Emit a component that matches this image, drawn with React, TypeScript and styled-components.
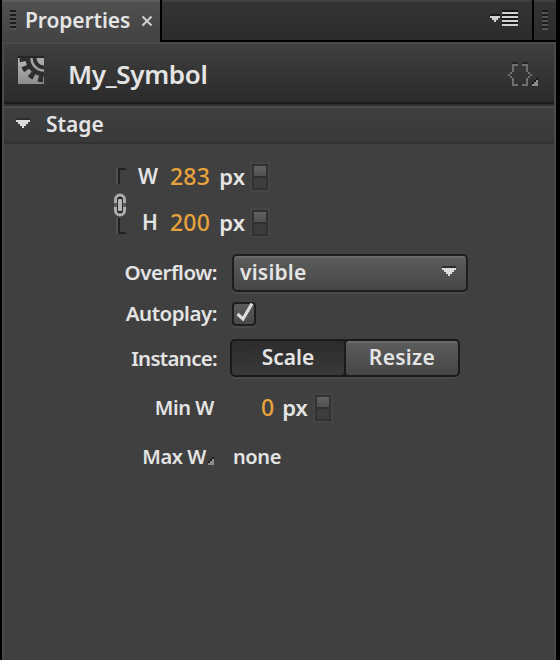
import React from "react";
import styled, { createGlobalStyle } from "styled-components";

const GlobalStyle = createGlobalStyle`
  * { box-sizing: border-box; }
  body { margin: 0; background: #000; font-family: "Noto Sans", "Open Sans", sans-serif; color: #e4e4e4; overflow: hidden; }
  svg { display: block; flex: none; }
`;

const Window = styled.div`
  width: 560px;
  height: 660px;
  display: flex;
  flex-direction: column;
  padding: 0 4px 0 2px;
  background: #000;
`;

const TabBar = styled.div`
  height: 42px;
  flex: none;
  display: flex;
`;

const Tab = styled.div`
  width: 158px;
  height: 42px;
  display: flex;
  align-items: flex-start;
  padding: 8px 0 0 8px;
  border-top: 2px solid #5c5c5c;
  background: linear-gradient(#505050, #424242);
`;

const TabStrip = styled.div<{ $width?: number }>`
  ${(p) => (p.$width ? `width: ${p.$width}px;` : "flex: 1;")}
  height: 40px;
  margin-left: 2px;
  display: flex;
  justify-content: flex-end;
  padding: 8px ${(p) => (p.$width ? 8 : 12)}px 0 0;
  border-top: 2px solid #404040;
  background: linear-gradient(#343434, #2c2c2c);
`;

const Grip = styled.div`
  width: 6px;
  height: 20px;
  flex: none;
  background: repeating-linear-gradient(#1c1c1c 0 2px, #555 2px 4px);
`;

const Text = styled.span<{ $size?: number; $track?: number; $weight?: number }>`
  font-size: ${(p) => p.$size ?? 21}px;
  line-height: 30px;
  height: 30px;
  letter-spacing: ${(p) => p.$track ?? 0}px;
  font-weight: ${(p) => p.$weight ?? 600};
  white-space: nowrap;
`;

const TabTitle = styled(Text)`
  margin: -5px 9px 0 9px;
  width: 107px;
`;

const CloseIcon = styled.svg`
  margin-top: 5px;
`;

const Panel = styled.div`
  flex: 1;
  display: flex;
  flex-direction: column;
  border: solid #4a4a4a;
  border-width: 0 2px;
  background: #404040;
`;

const SymbolHeader = styled.div`
  height: 64px;
  flex: none;
  display: flex;
  align-items: flex-start;
  padding: 12px 16px 0 14px;
  border-top: 2px solid #494949;
  border-bottom: 2px solid #303030;
  background: linear-gradient(#404040, #2a2a2a 58px, #1b1b1b 58px);
`;

const SymbolName = styled(Text)`
  flex: 1;
  margin: 3px 0 0 24px;
`;

const CodeIcon = styled.svg`
  margin-top: 6px;
`;

const SectionHeader = styled.div`
  height: 38px;
  flex: none;
  display: flex;
  align-items: flex-start;
  padding: 1px 0 0 12px;
  gap: 16px;
  border-top: 2px solid #4a4a4a;
  border-bottom: 2px solid #323232;
  background: linear-gradient(#404040, #383838);

  svg { margin-top: 9px; }
`;

const Form = styled.div`
  display: flex;
  flex-direction: column;
  padding-top: 17px;
`;

const SizeGroup = styled.div`
  display: flex;
  height: 93px;
  padding-left: 110px;
  gap: 8px;

  > svg { margin-top: 7px; }
`;

const SizeFields = styled.div`
  display: flex;
  flex-direction: column;
  gap: 16px;
`;

const SizeRow = styled.div`
  height: 30px;
  display: grid;
  grid-template-columns: 22px 52px 35px 24px;
  align-items: center;
  text-align: right;
`;

const Value = styled(Text)`
  color: #e8a33d;
`;

const Stepper = styled.div`
  width: 16px;
  height: 26px;
  margin: 2px 0 0 7px;
  border: 2px solid #323232;
  box-shadow: 0 0 0 2px #454545;
  background: linear-gradient(#626262, #505050 10px, #303030 10px 12px, #3d3d3d 12px);
`;

const Row = styled.div<{ $height: number }>`
  height: ${(p) => p.$height}px;
  display: grid;
  grid-template-columns: 213px 1fr;
  align-items: center;
`;

const RowLabel = styled(Text)<{ $inset?: number; $lift?: number }>`
  text-align: right;
  margin-bottom: ${(p) => p.$lift ?? 0}px;
  padding-right: ${(p) => p.$inset ?? 0}px;
`;

const MenuLabel = styled.div`
  display: flex;
  justify-content: flex-end;
  align-items: center;
  padding-right: 3px;
  gap: 2px;

  svg { margin-top: 8px; }
`;

const Control = styled.div<{ $left: number; $lift?: number }>`
  display: flex;
  align-items: center;
  margin-left: ${(p) => p.$left}px;
  margin-bottom: ${(p) => p.$lift ?? 0}px;
`;

const Select = styled.div`
  width: 236px;
  height: 38px;
  display: flex;
  align-items: center;
  justify-content: space-between;
  padding: 0 10px 2px 6px;
  border: 2px solid #1d1d1d;
  border-radius: 5px;
  box-shadow: 0 2px 0 #4a4a4a;
  background: linear-gradient(#6a6a6a 2px, #5b5b5b 2px, #464646);

  svg { margin-bottom: 2px; }
`;

const CheckBox = styled.div`
  width: 24px;
  height: 24px;
  border: 2px solid #1d1d1d;
  border-radius: 4px;
  box-shadow: 0 2px 0 #4a4a4a;
  background: linear-gradient(#5b5b5b, #484848);

  svg { margin: -2px 0 0 2px; }
`;

const Segments = styled.div`
  width: 230px;
  height: 38px;
  display: flex;
  border: 2px solid #1a1a1a;
  border-radius: 5px;
  box-shadow: 0 2px 0 #4a4a4a;
  background: #1a1a1a;
  gap: 2px;
`;

const Segment = styled.div<{ $active?: boolean }>`
  flex: none;
  width: 112px;
  display: flex;
  align-items: center;
  justify-content: center;
  padding-bottom: 2px;
  border-radius: 3px;
  background: ${(p) => (p.$active ? "linear-gradient(#2c2c2c, #393939)" : "linear-gradient(#6a6a6a 2px, #5b5b5b 2px, #464646)")};
`;

const Triangle = () => (
  <svg width="14" height="10" viewBox="0 0 7 5" shapeRendering="crispEdges">
    <path d="M0 0h7v1H0z" fill="#2c2c2c" />
    <path d="M0 1h7v1H6v1H5v1H4v1H3V4H2V3H1V2H0z" fill="#dcdcdc" />
  </svg>
);

const Corner = () => (
  <svg width="6" height="8" viewBox="0 0 3 4" shapeRendering="crispEdges">
    <path d="M2 0h1v1H2v1H1v1H0V2h1V1h1z" fill="#1e1e1e" />
    <path d="M2 1h1v3H0V3h1V2h1z" fill="#8c8c8c" />
  </svg>
);

const SymbolIcon = () => (
  <svg width="26" height="28" viewBox="0 -2 26 28">
    <defs>
      <linearGradient id="plate" x1="0" y1="0" x2="0" y2="1">
        <stop offset="0" stopColor="#b8b8b8" />
        <stop offset="1" stopColor="#8c8c8c" />
      </linearGradient>
    </defs>
    <path d="M0-2h26v2H0z" fill="#262626" />
    <path d="M0 0h26v26H0z" fill="url(#plate)" />
    <svg x="0" y="0" width="26" height="26" viewBox="0 0 26 26">
      <circle cx="26" cy="0" r="18.5" fill="#2e2e2e" />
      <circle cx="26" cy="0" r="21" fill="none" stroke="#2e2e2e" strokeWidth="7" strokeDasharray="4.9 4.525" strokeDashoffset="-5.35" />
      <circle cx="26" cy="0" r="12.5" fill="none" stroke="#a0a0a0" strokeWidth="2.6" />
      <circle cx="26" cy="0" r="7.5" fill="#a8a8a8" />
    </svg>
  </svg>
);

const LinkIcon = () => (
  <svg width="14" height="66" viewBox="0 0 14 66">
    <path d="M2 0h2v16H2zM2 50h2v16H2z" fill="#525252" />
    <path d="M4 0h8v2H6v14H4zM4 50h2v14h6v2H4z" fill="#242020" />
    <rect x="1.5" y="27" width="9" height="20" rx="4.5" fill="#2a2a2a" stroke="#adadad" strokeWidth="3" />
    <path d="M0 35h3v4H0zM9 35h3v4H9z" fill="#5c5c5c" />
    <rect x="4" y="31" width="4" height="12" rx="1" fill="#b4b4b4" />
  </svg>
);

const fields = [
  { name: "W", value: "283" },
  { name: "H", value: "200" },
];

const App = () => (
  <>
    <GlobalStyle />
    <Window>
      <TabBar>
        <Tab>
          <Grip />
          <TabTitle $track={-0.1}>Properties</TabTitle>
          <CloseIcon width="12" height="12" viewBox="0 0 12 12">
            <path d="M1.5 1.5l9 9M10.5 1.5l-9 9" stroke="#d0d0d0" strokeWidth="2" />
          </CloseIcon>
        </Tab>
        <TabStrip>
          <svg width="30" height="18" viewBox="0 0 15 9" shapeRendering="crispEdges">
            <path d="M0 2h5v1H0zM6 0h8v1H6zM6 2h8v1H6zM6 4h8v1H6zM6 6h8v1H6z" fill="#181818" />
            <path d="M0 3h5v1H4v1H3v1H2V5H1V4H0zM6 1h8v1H6zM6 3h8v1H6zM6 5h8v1H6zM6 7h8v1H6z" fill="#d0d0d0" />
          </svg>
        </TabStrip>
        <TabStrip $width={22}><Grip /></TabStrip>
      </TabBar>
      <Panel>
        <SymbolHeader>
          <SymbolIcon />
          <SymbolName $size={26} $track={-0.35}>My_Symbol</SymbolName>
          <CodeIcon width="30" height="24" viewBox="0 0 15 12" shapeRendering="crispEdges">
            <path d="M2 0h3v1H2zM7 0h3v1H7z" fill="#222" />
            <path d="M2 1h3v1H3v3H2v1H1v1h1v1h1v3h2v1H2V8H1V7H0V6h1V5h1zM7 1h3v4h1v1h1v1h-1v1h-1v4H7v-1h2V8h1V7h1V6h-1V5H9V2H7z" fill="#707070" />
            <path d="M14 8h1v1h-1v1h-1v1h-1v-1h1V9h1z" fill="#181818" />
            <path d="M14 9h1v3h-3v-1h1v-1h1z" fill="#8c8c8c" />
          </CodeIcon>
        </SymbolHeader>
        <SectionHeader>
          <Triangle />
          <Text>Stage</Text>
        </SectionHeader>
        <Form>
          <SizeGroup>
            <LinkIcon />
            <SizeFields>
              {fields.map((f) => (
                <SizeRow key={f.name}>
                  <Text>{f.name}</Text>
                  <Value $size={23} $weight={500} $track={0.2}>{f.value}</Value>
                  <Text $size={22}>px</Text>
                  <Stepper />
                </SizeRow>
              ))}
            </SizeFields>
          </SizeGroup>
          <Row $height={38}>
            <RowLabel $size={20.5} $track={-0.45} $lift={2}>Overflow:</RowLabel>
            <Control $left={15}><Select><Text $track={0.2}>visible</Text><Triangle /></Select></Control>
          </Row>
          <Row $height={44}>
            <RowLabel $size={20.5} $track={-0.45} $lift={3}>Autoplay:</RowLabel>
            <Control $left={15}>
              <CheckBox>
                <svg width="18" height="20" viewBox="0 0 18 20">
                  <path d="M1.5 12l5.5 5L16 1.5" fill="none" stroke="#dcdcdc" strokeWidth="3.2" />
                </svg>
              </CheckBox>
            </Control>
          </Row>
          <Row $height={46}>
            <RowLabel $size={20.5} $track={-0.7} $lift={3}>Instance:</RowLabel>
            <Control $left={13} $lift={3}>
              <Segments>
                <Segment $active><Text>Scale</Text></Segment>
                <Segment><Text $track={0.3}>Resize</Text></Segment>
              </Segments>
            </Control>
          </Row>
          <Row $height={52}>
            <RowLabel $size={20} $track={-0.4} $inset={3}>Min W</RowLabel>
            <Control $left={44} $lift={3}>
              <Value $size={23} $weight={500}>0</Value>
              <Control $left={8}><Text $size={22}>px</Text></Control>
              <Stepper />
            </Control>
          </Row>
          <Row $height={46}>
            <MenuLabel><Text $size={20} $track={-0.4}>Max W</Text><Corner /></MenuLabel>
            <Control $left={16}><Text $size={20} $track={-0.4}>none</Text></Control>
          </Row>
        </Form>
      </Panel>
    </Window>
  </>
);

export default App;
